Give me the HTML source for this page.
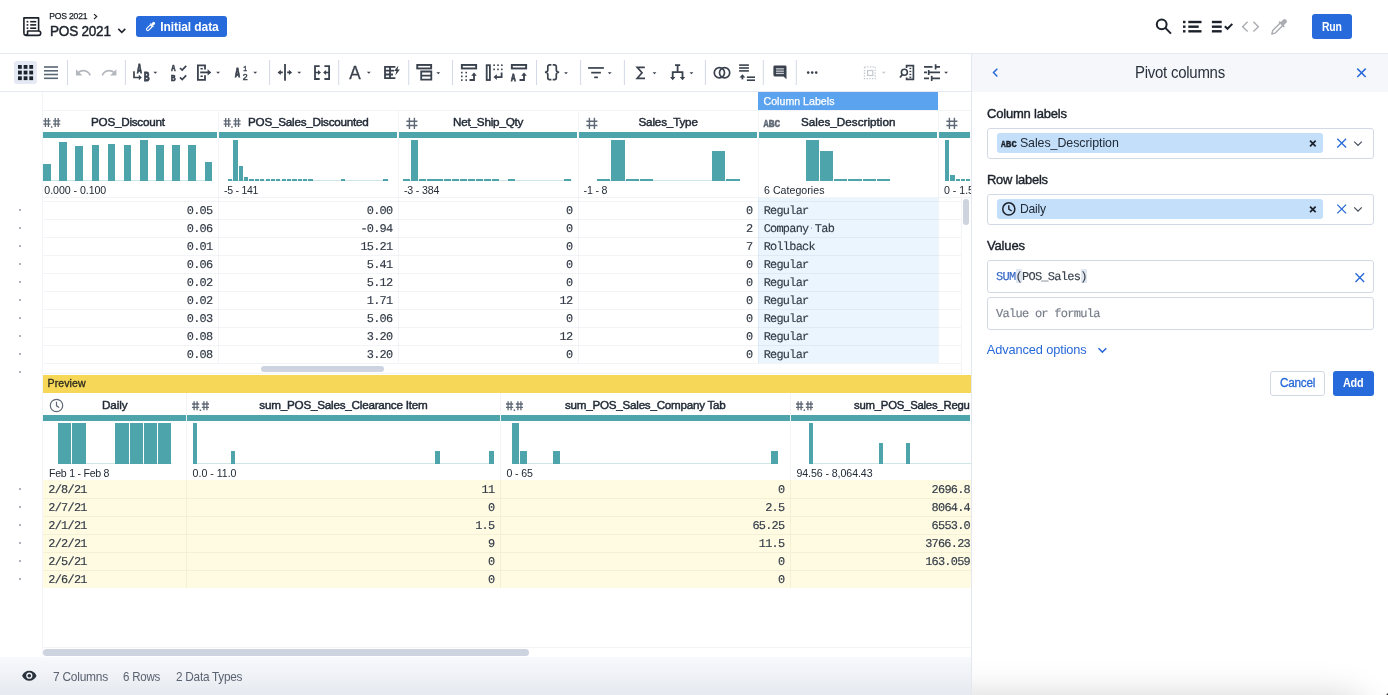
<!DOCTYPE html>
<html lang="en">
<head>
<meta charset="utf-8">
<title>POS 2021</title>
<style>
*{box-sizing:border-box;margin:0;padding:0}
html,body{width:1388px;height:695px;overflow:hidden;background:#fff}
body{will-change:transform;font-family:"Liberation Sans",sans-serif;color:#222b36;position:relative;font-size:12px}
.t{position:absolute;white-space:pre;display:block}
.a{position:absolute}
.m{font-family:"Liberation Mono",monospace}
svg{position:absolute;overflow:visible}
svg text{font-family:"Liberation Mono",monospace;font-weight:bold}
#hdr{position:absolute;left:0;top:0;width:1388px;height:54px;border-bottom:1px solid #e4e9f2;background:#fff}
#tb{position:absolute;left:0;top:54px;width:971px;height:38px;border-bottom:1px solid #e4e9f2;background:#fff}
#grid{position:absolute;left:0;top:92px;width:971px;height:566px;background:#fff;overflow:hidden}
#status{position:absolute;left:0;top:657px;width:971px;height:38px;background:linear-gradient(#f7f9fc,#e6e9ef)}
#panel{position:absolute;left:971px;top:54px;width:417px;height:641px;background:#fff;border-left:1px solid #e2e7f0}
#pfade{position:absolute;left:972px;top:640px;width:416px;height:55px;overflow:hidden}
#pfade i{position:absolute;left:-40px;top:69px;width:425px;height:40px;border-radius:20px;box-shadow:0 0 34px 14px rgba(0,0,0,.17)}
#pfade b{position:absolute;right:0;bottom:0;width:0;height:0;border-left:2px solid transparent;border-bottom:2px solid #333}
.btn{position:absolute;border-radius:3px;background:#276adb}
.vl{position:absolute;width:1px;background:rgba(30,60,110,.055)}
.hl{position:absolute;height:1px;background:rgba(30,60,110,.055)}
.teal{position:absolute;background:#4da4aa}
.bar{position:absolute;background:#4da4aa}
.base{position:absolute;height:1px;background:#cfe6e8}
.box{position:absolute;border:1px solid #d3d9e4;border-radius:3px;background:#fff}
.chip{position:absolute;border-radius:3px;background:#c3dffa}
</style>
</head>
<body>
<div id="hdr">
<svg width="1388" height="54" viewBox="0 0 1388 54" style="left:0;top:0">
<g fill="none" stroke="#1c222b" stroke-width="1.6" stroke-linejoin="round" stroke-linecap="butt">
<path d="M23.9 33.2V17.9H38.6V31"/>
<path d="M23.9 33.2a2.2 2.2 0 0 0 2.2 2.2H38.5a2.2 2.2 0 0 0 0-4.4H27.6v2.3a1.8 1.8 0 0 1-3.6 0"/>
</g>
<g fill="#1c222b">
<rect x="26.6" y="20.9" width="1.7" height="1.6"/><rect x="30.2" y="20.9" width="6" height="1.6"/>
<rect x="26.6" y="24.1" width="1.7" height="1.6"/><rect x="30.2" y="24.1" width="6" height="1.6"/>
<rect x="26.6" y="27.4" width="1.7" height="1.6"/><rect x="30.2" y="27.4" width="6" height="1.6"/>
</g>
<path d="M94 14.1l2.700 2.500-2.700 2.500" fill="none" stroke="#1c222b" stroke-width="1.2"/>
<path d="M118.3 28.9l3.5 3.5 3.5-3.5" fill="none" stroke="#1c222b" stroke-width="1.5"/>
<!-- search -->
<g fill="none" stroke="#1c222b" stroke-width="2">
<circle cx="1161.700" cy="24.300" r="4.900"/><path d="M1165.300 27.900l5.700 5.700"/>
</g>
<!-- list -->
<g fill="#1c222b">
<rect x="1183" y="20.8" width="2.5" height="2.4"/><rect x="1188.3" y="20.8" width="13.2" height="2.4"/>
<rect x="1183" y="25.5" width="2.5" height="2.4"/><rect x="1188.3" y="25.5" width="10.4" height="2.4"/>
<rect x="1183" y="30.1" width="2.5" height="2.4"/><rect x="1188.3" y="30.1" width="13.2" height="2.4"/>
<rect x="1211.9" y="20.8" width="9.8" height="2.4"/>
<rect x="1211.9" y="25.5" width="9.8" height="2.4"/>
<rect x="1211.9" y="30.1" width="9.8" height="2.4"/>
</g>
<path d="M1224.8 26.2l2.7 2.6 4.8-4.9" fill="none" stroke="#1c222b" stroke-width="2"/>
<!-- code -->
<path d="M1247.6 21.8l-5 4.9 5 4.9M1253.4 21.8l5 4.9-5 4.9" fill="none" stroke="#a9acb1" stroke-width="1.4"/>
<!-- dropper -->
<g fill="none" stroke="#a9acb1" stroke-width="1.4" stroke-linejoin="round">
<path d="M1280 23.3l-7.3 7.3-.9 3.4 3.4-.9 7.3-7.3"/>
</g>
<path d="M1278.6 22.3l1.2-1.2 1 1 2.600-2.600a1.700 1.700 0 0 1 2.400 0l.7.7a1.700 1.700 0 0 1 0 2.400l-2.600 2.600 1 1-1.200 1.200z" fill="#a9acb1"/>
<!-- initial data pencil -->
</svg>
<span class="t" style="top:12.00px;font-size:8.6px;line-height:8.6px;left:49.30px;letter-spacing:-0.198px;color:#1c222b;-webkit-text-stroke:0.25px #1c222b;">POS 2021</span>
<span class="t" style="top:24.00px;font-size:14.2px;line-height:14.2px;left:49.60px;letter-spacing:-0.250px;color:#1c222b;-webkit-text-stroke:0.45px #1c222b;transform:scaleX(0.9565);transform-origin:0 50%;">POS 2021</span>
<div class="btn" style="left:136px;top:16px;width:91px;height:21px"></div>
<svg width="12" height="12" viewBox="144 21 12 12" style="left:144px;top:21px">
<g transform="translate(150 27) rotate(45)">
<rect x="-1.350" y="-1.900" width="2.700" height="6.300" rx="1.250" fill="none" stroke="#fff" stroke-width="1.100"/>
<rect x="-2.400" y="-3" width="4.800" height="1.200" fill="#fff"/>
<rect x="-1.400" y="-6.600" width="2.800" height="4" rx="1.200" fill="#fff"/>
</g>
</svg>
<span class="t" style="top:21.00px;font-size:12px;line-height:12px;left:160.30px;letter-spacing:-0.077px;font-weight:bold;color:#fff;">Initial data</span>
<div class="btn" style="left:1312px;top:14px;width:40px;height:25px"></div>
<span class="t" style="top:21.00px;font-size:12px;line-height:12px;left:1321.80px;letter-spacing:-0.250px;font-weight:bold;color:#fff;transform:scaleX(0.8674);transform-origin:0 50%;">Run</span>
</div>
<div id="tb"></div>
<svg width="971" height="38" viewBox="0 54 971 38" style="left:0;top:54px">
<rect x="14" y="61" width="23" height="23" rx="3" fill="#e4e9f3"/>
<rect x="18.00" y="65.00" width="3.8" height="3.8" fill="#1c222b"/>
<rect x="23.65" y="65.00" width="3.8" height="3.8" fill="#1c222b"/>
<rect x="29.30" y="65.00" width="3.8" height="3.8" fill="#1c222b"/>
<rect x="18.00" y="70.65" width="3.8" height="3.8" fill="#1c222b"/>
<rect x="23.65" y="70.65" width="3.8" height="3.8" fill="#1c222b"/>
<rect x="29.30" y="70.65" width="3.8" height="3.8" fill="#1c222b"/>
<rect x="18.00" y="76.30" width="3.8" height="3.8" fill="#1c222b"/>
<rect x="23.65" y="76.30" width="3.8" height="3.8" fill="#1c222b"/>
<rect x="29.30" y="76.30" width="3.8" height="3.8" fill="#1c222b"/>
<rect x="44" y="66.20" width="14" height="1.6" fill="#5a6775"/>
<rect x="44" y="70.00" width="14" height="1.6" fill="#5a6775"/>
<rect x="44" y="73.70" width="14" height="1.6" fill="#5a6775"/>
<rect x="44" y="77.50" width="14" height="1.6" fill="#5a6775"/>
<rect x="67.0" y="60" width="1" height="25" fill="#d3d9e6"/>
<rect x="124.9" y="60" width="1" height="25" fill="#d3d9e6"/>
<rect x="269.1" y="60" width="1" height="25" fill="#d3d9e6"/>
<rect x="338.2" y="60" width="1" height="25" fill="#d3d9e6"/>
<rect x="408.2" y="60" width="1" height="25" fill="#d3d9e6"/>
<rect x="452.0" y="60" width="1" height="25" fill="#d3d9e6"/>
<rect x="536.0" y="60" width="1" height="25" fill="#d3d9e6"/>
<rect x="580.1" y="60" width="1" height="25" fill="#d3d9e6"/>
<rect x="623.9" y="60" width="1" height="25" fill="#d3d9e6"/>
<rect x="704.9" y="60" width="1" height="25" fill="#d3d9e6"/>
<rect x="762.8" y="60" width="1" height="25" fill="#d3d9e6"/>
<rect x="795.8" y="60" width="1" height="25" fill="#d3d9e6"/>
<path d="M90.200 75.300c-1.600-3-4.200-4.600-7-4.600-2 0-3.700.7-5 1.900" fill="none" stroke="#b4b8be" stroke-width="1.7"/>
<path d="M76 69.300v6.300h6.300z" fill="#b4b8be"/>
<path d="M102.200 75.300c1.600-3 4.200-4.600 7-4.600 2 0 3.700.7 5 1.900" fill="none" stroke="#b4b8be" stroke-width="1.7"/>
<path d="M116.400 69.300v6.300h-6.300z" fill="#b4b8be"/>
<text transform="translate(137.00 72.60) scale(0.783 1.214)" font-size="10" fill="#3a424e" stroke="#3a424e" stroke-width="0.65" style="font-family:Liberation Mono,monospace;font-weight:bold">A</text>
<text transform="translate(143.66 80.70) scale(0.957 1.229)" font-size="10" fill="#3a424e" stroke="#3a424e" stroke-width="0.65" style="font-family:Liberation Mono,monospace;font-weight:bold">B</text>
<path d="M134 71.200v6.300h5.500" fill="none" stroke="#3a424e" stroke-width="1.700"/>
<path d="M138.800 74.700l3 2.800-3 2.800z" fill="#3a424e"/>
<path d="M153.4 71.7h3.8l-1.9 2.100z" fill="#3a424e"/>
<text transform="translate(171.20 71.30) scale(0.700 0.971)" font-size="10" fill="#3a424e" stroke="#3a424e" stroke-width="0.65" style="font-family:Liberation Mono,monospace;font-weight:bold">A</text>
<text transform="translate(170.76 80.70) scale(0.801 0.986)" font-size="10" fill="#3a424e" stroke="#3a424e" stroke-width="0.65" style="font-family:Liberation Mono,monospace;font-weight:bold">B</text>
<path d="M180 68l2.200 2.100 4-4.200M180 77.400l2.200 2.100 4-4.200" fill="none" stroke="#3a424e" stroke-width="1.700"/>
<path d="M205 69.500V65.400H197.900V79.900H205V75.300" fill="none" stroke="#3a424e" stroke-width="1.800"/>
<path d="M200.500 68.700h2.300M200.500 76.300h2.300" stroke="#3a424e" stroke-width="1.600"/>
<path d="M200.200 72.400h8" stroke="#3a424e" stroke-width="1.800"/>
<path d="M207.600 69.200l3.700 3.200-3.700 3.200z" fill="#3a424e"/>
<path d="M216.2 71.7h3.8l-1.9 2.100z" fill="#3a424e"/>
<text transform="translate(235.10 77.20) scale(0.817 1.305)" font-size="10" fill="#3a424e" stroke="#3a424e" stroke-width="0.65" style="font-family:Liberation Mono,monospace;font-weight:bold">A</text>
<text transform="translate(243.15 71.10) scale(0.625 0.759)" font-size="10" fill="#3a424e" stroke="#3a424e" stroke-width="0.55" style="font-family:Liberation Mono,monospace;font-weight:normal">1</text>
<text transform="translate(242.47 80.00) scale(0.893 0.867)" font-size="10" fill="#3a424e" stroke="#3a424e" stroke-width="0.55" style="font-family:Liberation Mono,monospace;font-weight:normal">2</text>
<path d="M253.3 71.7h3.8l-1.9 2.100z" fill="#3a424e"/>
<rect x="284.100" y="64" width="1.800" height="16.700" fill="#3a424e"/>
<path d="M282.800 72.400h-3.500M289.200 72.400h-2" stroke="#3a424e" stroke-width="1.600"/>
<path d="M280.800 69.700l-3.200 2.700 3.200 2.700zM288.900 69.700l3.200 2.700-3.200 2.700z" fill="#3a424e"/>
<path d="M297.3 71.7h3.8l-1.9 2.100z" fill="#3a424e"/>
<path d="M319.700 66.100H315V79H319.700M324.400 66.100H329.100V79H324.400" fill="none" stroke="#3a424e" stroke-width="1.800"/>
<path d="M315 72.500h3.500M329 72.500h-3.500" stroke="#3a424e" stroke-width="1.600"/>
<path d="M318 70l3 2.500-3 2.500zM326.100 70l-3 2.500 3 2.500z" fill="#3a424e"/>
<text transform="translate(349.17 79.00) scale(1.719 1.875)" font-size="10" fill="#3a424e" stroke="#3a424e" stroke-width="0.15" style="font-family:Liberation Sans,sans-serif;font-weight:normal">A</text>
<path d="M366.9 71.7h3.8l-1.9 2.100z" fill="#3a424e"/>
<path d="M395.400 66.900H385V78.200H395.400M385 70.700H394M385 74.500H393M390 66.900V78.200" fill="none" stroke="#3a424e" stroke-width="1.800"/>
<path d="M398.400 65.500l-4.300 5.600h2.300l-1.100 4.300 4.600-6h-2.400z" fill="#3a424e"/>
<rect x="417.250" y="64.950" width="13.900" height="3.500" fill="none" stroke="#3a424e" stroke-width="1.900"/>
<path d="M421.200 71.500H431.300V79.700H421.200zM421.200 75.600H431.300" fill="none" stroke="#3a424e" stroke-width="1.800"/>
<path d="M436.4 72.2h3.8l-1.9 2.100z" fill="#3a424e"/>
<rect x="461.850" y="64.950" width="14.300" height="3.500" fill="none" stroke="#3a424e" stroke-width="1.900"/>
<rect x="461" y="71.8" width="1.600" height="1.600" fill="#3a424e"/>
<rect x="465.4" y="71.8" width="1.600" height="1.600" fill="#3a424e"/>
<rect x="461" y="75.6" width="1.600" height="1.600" fill="#3a424e"/>
<rect x="465.4" y="75.6" width="1.600" height="1.600" fill="#3a424e"/>
<rect x="461" y="79.3" width="1.600" height="1.600" fill="#3a424e"/>
<rect x="465.4" y="79.3" width="1.600" height="1.600" fill="#3a424e"/>
<path d="M469.5 80h4.500v-5" fill="none" stroke="#3a424e" stroke-width="1.800"/><path d="M471.2 75.700l2.800-3.300 2.800 3.300z" fill="#3a424e"/>
<rect x="486.700" y="65.200" width="3.200" height="14.800" fill="none" stroke="#3a424e" stroke-width="1.800"/>
<rect x="493.3" y="64.4" width="1.600" height="1.600" fill="#3a424e"/>
<rect x="497.2" y="64.4" width="1.600" height="1.600" fill="#3a424e"/>
<rect x="501" y="64.4" width="1.600" height="1.600" fill="#3a424e"/>
<rect x="493.3" y="68.6" width="1.600" height="1.600" fill="#3a424e"/>
<rect x="497.2" y="68.6" width="1.600" height="1.600" fill="#3a424e"/>
<rect x="501" y="68.6" width="1.600" height="1.600" fill="#3a424e"/>
<path d="M501.600 72.500v4.600h-5.500" fill="none" stroke="#3a424e" stroke-width="1.800"/>
<path d="M496.800 74.300l-3.300 2.800 3.300 2.800z" fill="#3a424e"/>
<rect x="511.850" y="64.950" width="14.300" height="3.500" fill="none" stroke="#3a424e" stroke-width="1.900"/>
<text transform="translate(511.00 80.80) scale(0.767 1.184)" font-size="10" fill="#3a424e" stroke="#3a424e" stroke-width="0.65" style="font-family:Liberation Mono,monospace;font-weight:bold">A</text>
<path d="M519.5 80h4.500v-5" fill="none" stroke="#3a424e" stroke-width="1.800"/><path d="M521.2 75.700l2.800-3.300 2.800 3.300z" fill="#3a424e"/>
<path d="M551.400 64.900h-1.800a1.800 1.800 0 0 0-1.800 1.800v3.350a2.900 2.200 0 0 1-2.900 2.200a2.900 2.200 0 0 1 2.900 2.200v3.350a1.800 1.800 0 0 0 1.800 1.800h1.800M552.700 64.900h1.800a1.800 1.800 0 0 1 1.800 1.800v3.350a2.900 2.200 0 0 0 2.900 2.200a2.900 2.200 0 0 0-2.900 2.200v3.350a1.800 1.800 0 0 1-1.800 1.800h-1.800" fill="none" stroke="#3a424e" stroke-width="1.700"/>
<path d="M564.1 72.2h3.8l-1.9 2.100z" fill="#3a424e"/>
<rect x="588.100" y="67.100" width="15.800" height="1.700" fill="#3a424e"/><rect x="591.200" y="71.800" width="9.700" height="1.700" fill="#3a424e"/><rect x="594.200" y="76.500" width="3.700" height="1.700" fill="#3a424e"/>
<path d="M607.8 72.2h3.8l-1.9 2.100z" fill="#3a424e"/>
<path d="M644.800 67.400H637.200L642 72.800 637.200 78.300H645" fill="none" stroke="#3a424e" stroke-width="1.700" stroke-linejoin="miter"/>
<path d="M652.6 72.2h3.8l-1.9 2.100z" fill="#3a424e"/>
<path d="M675 65.200h5.200M677.600 65.200v7M672.700 77.500v-5.300h9.800v5.300" fill="none" stroke="#3a424e" stroke-width="1.800"/>
<path d="M670 76.900h5.400l-2.700 3.400zM679.800 76.900h5.400l-2.700 3.400z" fill="#3a424e"/>
<path d="M689.6 72.2h3.8l-1.9 2.100z" fill="#3a424e"/>
<circle cx="719.400" cy="72.800" r="5.100" fill="none" stroke="#3a424e" stroke-width="1.700"/><circle cx="724.600" cy="72.800" r="5.100" fill="none" stroke="#3a424e" stroke-width="1.700"/>
<rect x="739.100" y="64.3" width="9.800" height="1.600" fill="#3a424e"/>
<rect x="739.100" y="67.2" width="9.800" height="1.600" fill="#3a424e"/>
<rect x="739.100" y="70.1" width="9.800" height="1.600" fill="#3a424e"/>
<rect x="746.900" y="76.4" width="8.100" height="1.600" fill="#3a424e"/>
<rect x="746.900" y="79.4" width="8.100" height="1.600" fill="#3a424e"/>
<path d="M742.400 79.400v-3" stroke="#3a424e" stroke-width="1.800"/><path d="M739.500 77.500l2.900-3.200 2.900 3.200z" fill="#3a424e"/>
<path d="M774.700 65.600h10.500a1.300 1.300 0 0 1 1.300 1.300V79.300l-3-2.900h-8.800a1.300 1.300 0 0 1-1.300-1.300V66.900a1.300 1.300 0 0 1 1.300-1.300z" fill="#3a424e"/>
<rect x="776" y="68.2" width="7.900" height="1.300" fill="#c9cdd3"/>
<rect x="776" y="70.5" width="7.900" height="1.300" fill="#c9cdd3"/>
<rect x="776" y="72.8" width="7.900" height="1.300" fill="#c9cdd3"/>
<circle cx="808.2" cy="72.600" r="1.300" fill="#3a424e"/>
<circle cx="812.2" cy="72.600" r="1.300" fill="#3a424e"/>
<circle cx="816.2" cy="72.600" r="1.300" fill="#3a424e"/>
<rect x="864.500" y="66.900" width="10.700" height="11.700" fill="none" stroke="#c4c8cf" stroke-width="1.300" stroke-dasharray="1.300 1.400"/>
<rect x="867.600" y="70.500" width="5.200" height="5" fill="none" stroke="#c4c8cf" stroke-width="1.200"/>
<path d="M881.8 71.7h3.8l-1.9 2.100z" fill="#c4c8cf"/>
<path d="M906.600 68V65.700h6.800V79.300h-6.800V77.500" fill="none" stroke="#3a424e" stroke-width="1.700"/>
<rect x="909.400" y="67.8" width="1.900" height="1.300" fill="#3a424e"/>
<rect x="909.400" y="70.8" width="1.900" height="1.300" fill="#3a424e"/>
<rect x="909.400" y="73.8" width="1.900" height="1.300" fill="#3a424e"/>
<rect x="909.400" y="76.6" width="1.900" height="1.300" fill="#3a424e"/>
<circle cx="904.400" cy="72.300" r="3" fill="#fff" stroke="#3a424e" stroke-width="1.600"/><path d="M902.300 74.600l-2.300 2.900" stroke="#3a424e" stroke-width="1.700"/>
<path d="M924 66.800h8.500M935.600 66.800h4.400M924 72.400h3M928.800 72.400h11.200M924 78.300h5M931.800 78.300h8.200" stroke="#3a424e" stroke-width="1.800"/>
<path d="M935.600 64.200v5.300M928.700 69.900v5.100M931.700 75.800v5.300" stroke="#3a424e" stroke-width="1.700"/>
<path d="M944.2 71.7h3.8l-1.9 2.100z" fill="#3a424e"/>
</svg>
<div id="grid">
<div class="a" style="left:0;top:-92px;width:971px;height:750px">
<div class="vl" style="left:42px;top:92px;height:566px"></div>
<div class="a" style="left:758px;top:92px;width:180px;height:18px;background:#5ba3ee"></div>
<span class="t" style="top:96.00px;font-size:10.6px;line-height:10.6px;left:763.50px;letter-spacing:0.024px;color:#fff;-webkit-text-stroke:0.25px #fff;">Column Labels</span>
<div class="hl" style="left:43px;top:110px;width:928px"></div>
<div class="a" style="left:758px;top:198px;width:180px;height:165px;background:#eaf5fe"></div>
<div class="vl" style="left:218px;top:111px;height:252px"></div>
<div class="vl" style="left:398px;top:111px;height:252px"></div>
<div class="vl" style="left:578px;top:111px;height:252px"></div>
<div class="vl" style="left:758px;top:111px;height:252px"></div>
<div class="vl" style="left:938px;top:111px;height:252px"></div>
<div class="teal" style="left:43px;top:132px;width:174px;height:6px"></div>
<div class="teal" style="left:219px;top:132px;width:178px;height:6px"></div>
<div class="teal" style="left:399px;top:132px;width:178px;height:6px"></div>
<div class="teal" style="left:579px;top:132px;width:178px;height:6px"></div>
<div class="teal" style="left:759px;top:132px;width:178px;height:6px"></div>
<div class="teal" style="left:939px;top:132px;width:31px;height:6px"></div>
<span class="t" style="top:116.00px;font-size:11.7px;line-height:11.7px;left:91.00px;letter-spacing:-0.249px;color:#222b36;-webkit-text-stroke:0.45px #222b36;">POS_Discount</span>
<span class="t" style="top:116.00px;font-size:11.7px;line-height:11.7px;left:248.00px;letter-spacing:-0.238px;color:#222b36;-webkit-text-stroke:0.45px #222b36;">POS_Sales_Discounted</span>
<span class="t" style="top:116.00px;font-size:11.7px;line-height:11.7px;left:453.00px;letter-spacing:-0.213px;color:#222b36;-webkit-text-stroke:0.45px #222b36;">Net_Ship_Qty</span>
<span class="t" style="top:116.00px;font-size:11.7px;line-height:11.7px;left:638.50px;letter-spacing:-0.182px;color:#222b36;-webkit-text-stroke:0.45px #222b36;">Sales_Type</span>
<span class="t" style="top:116.00px;font-size:11.7px;line-height:11.7px;left:801.00px;letter-spacing:0.012px;color:#222b36;-webkit-text-stroke:0.45px #222b36;">Sales_Description</span>
<svg width="971" height="40" viewBox="0 100 971 40" style="left:0;top:100px"><g><path d="M45.40 118v9M48.40 118v9M43.30 120.8h7.2M43.30 124.2h7.2" stroke="#5f6875" stroke-width="1.300" fill="none"/><path d="M55.20 118v9M58.20 118v9M53.10 120.8h7.2M53.10 124.2h7.2" stroke="#5f6875" stroke-width="1.300" fill="none"/><rect x="50.90" y="126.3" width="1.500" height="1.500" fill="#5f6875"/><path d="M225.70 118v9M228.70 118v9M223.60 120.8h7.2M223.60 124.2h7.2" stroke="#5f6875" stroke-width="1.300" fill="none"/><path d="M235.50 118v9M238.50 118v9M233.40 120.8h7.2M233.40 124.2h7.2" stroke="#5f6875" stroke-width="1.300" fill="none"/><rect x="231.20" y="126.3" width="1.500" height="1.500" fill="#5f6875"/><path d="M409.40 117.7v11.2M414.40 117.7v11.2M406.40 121.3h11M406.40 125.5h11" stroke="#5f6875" stroke-width="1.400" fill="none"/><path d="M589.40 117.7v11.2M594.40 117.7v11.2M586.40 121.3h11M586.40 125.5h11" stroke="#5f6875" stroke-width="1.400" fill="none"/><path d="M949.40 117.7v11.2M954.40 117.7v11.2M946.40 121.3h11M946.40 125.5h11" stroke="#5f6875" stroke-width="1.400" fill="none"/><text transform="translate(763.40 126.60) scale(0.858 1.047)" font-size="10" fill="#5f6875" stroke="#5f6875" stroke-width="0.4" style="font-family:Liberation Mono,monospace;font-weight:bold">A</text><text transform="translate(768.53 126.60) scale(1.006 1.047)" font-size="10" fill="#5f6875" stroke="#5f6875" stroke-width="0.4" style="font-family:Liberation Mono,monospace;font-weight:bold">B</text><text transform="translate(774.62 126.50) scale(0.966 1.016)" font-size="10" fill="#5f6875" stroke="#5f6875" stroke-width="0.4" style="font-family:Liberation Mono,monospace;font-weight:bold">C</text></g></svg>
<div class="base" style="left:43.00px;top:180px;width:169.00px"></div>
<div class="bar" style="left:43.20px;top:164.00px;width:7.60px;height:17.00px"></div>
<div class="bar" style="left:59.33px;top:142.40px;width:7.60px;height:38.60px"></div>
<div class="bar" style="left:75.46px;top:145.60px;width:7.60px;height:35.40px"></div>
<div class="bar" style="left:91.59px;top:144.50px;width:7.60px;height:36.50px"></div>
<div class="bar" style="left:107.72px;top:143.50px;width:7.60px;height:37.50px"></div>
<div class="bar" style="left:123.85px;top:144.50px;width:7.60px;height:36.50px"></div>
<div class="bar" style="left:139.98px;top:140.00px;width:7.60px;height:41.00px"></div>
<div class="bar" style="left:156.11px;top:144.50px;width:7.60px;height:36.50px"></div>
<div class="bar" style="left:172.24px;top:144.50px;width:7.60px;height:36.50px"></div>
<div class="bar" style="left:188.37px;top:144.50px;width:7.60px;height:36.50px"></div>
<div class="bar" style="left:204.50px;top:162.20px;width:7.60px;height:18.80px"></div>
<div class="base" style="left:228.00px;top:180px;width:160.50px"></div>
<div class="bar" style="left:228.00px;top:179.00px;width:4.20px;height:2.00px"></div>
<div class="bar" style="left:233.36px;top:140.00px;width:4.20px;height:41.00px"></div>
<div class="bar" style="left:238.72px;top:165.80px;width:4.20px;height:15.20px"></div>
<div class="bar" style="left:244.08px;top:176.60px;width:4.20px;height:4.40px"></div>
<div class="bar" style="left:340.56px;top:179.00px;width:4.20px;height:2.00px"></div>
<div class="bar" style="left:383.44px;top:179.00px;width:4.20px;height:2.00px"></div>
<div class="bar" style="left:249.44px;top:179.00px;width:4.20px;height:2.00px"></div>
<div class="bar" style="left:254.80px;top:179.00px;width:4.20px;height:2.00px"></div>
<div class="bar" style="left:260.16px;top:179.00px;width:4.20px;height:2.00px"></div>
<div class="bar" style="left:265.52px;top:179.00px;width:4.20px;height:2.00px"></div>
<div class="bar" style="left:270.88px;top:179.00px;width:4.20px;height:2.00px"></div>
<div class="bar" style="left:276.24px;top:179.00px;width:4.20px;height:2.00px"></div>
<div class="bar" style="left:281.60px;top:179.00px;width:4.20px;height:2.00px"></div>
<div class="bar" style="left:286.96px;top:179.00px;width:4.20px;height:2.00px"></div>
<div class="bar" style="left:292.32px;top:179.00px;width:4.20px;height:2.00px"></div>
<div class="bar" style="left:297.68px;top:179.00px;width:4.20px;height:2.00px"></div>
<div class="bar" style="left:303.04px;top:179.00px;width:4.20px;height:2.00px"></div>
<div class="bar" style="left:308.40px;top:179.00px;width:4.20px;height:2.00px"></div>
<div class="base" style="left:403.00px;top:180px;width:169.00px"></div>
<div class="bar" style="left:403.30px;top:179.00px;width:7.10px;height:2.00px"></div>
<div class="bar" style="left:411.34px;top:140.00px;width:7.10px;height:41.00px"></div>
<div class="bar" style="left:507.82px;top:179.00px;width:7.10px;height:2.00px"></div>
<div class="bar" style="left:564.10px;top:179.00px;width:7.10px;height:2.00px"></div>
<div class="bar" style="left:419.38px;top:179.00px;width:7.10px;height:2.00px"></div>
<div class="bar" style="left:427.42px;top:179.00px;width:7.10px;height:2.00px"></div>
<div class="bar" style="left:435.46px;top:179.00px;width:7.10px;height:2.00px"></div>
<div class="bar" style="left:443.50px;top:179.00px;width:7.10px;height:2.00px"></div>
<div class="bar" style="left:451.54px;top:179.00px;width:7.10px;height:2.00px"></div>
<div class="bar" style="left:459.58px;top:179.00px;width:7.10px;height:2.00px"></div>
<div class="bar" style="left:467.62px;top:179.00px;width:7.10px;height:2.00px"></div>
<div class="bar" style="left:475.66px;top:179.00px;width:7.10px;height:2.00px"></div>
<div class="bar" style="left:483.70px;top:179.00px;width:7.10px;height:2.00px"></div>
<div class="bar" style="left:491.74px;top:179.00px;width:7.10px;height:2.00px"></div>
<div class="base" style="left:597.00px;top:180px;width:143.00px"></div>
<div class="bar" style="left:597.00px;top:179.00px;width:13.40px;height:2.00px"></div>
<div class="bar" style="left:611.35px;top:140.00px;width:13.40px;height:41.00px"></div>
<div class="bar" style="left:625.70px;top:179.00px;width:13.40px;height:2.00px"></div>
<div class="bar" style="left:640.05px;top:179.00px;width:13.40px;height:2.00px"></div>
<div class="bar" style="left:711.80px;top:150.70px;width:13.40px;height:30.30px"></div>
<div class="bar" style="left:726.15px;top:179.00px;width:13.40px;height:2.00px"></div>
<div class="bar" style="left:805.50px;top:140.00px;width:13.40px;height:41.00px"></div>
<div class="bar" style="left:819.80px;top:150.80px;width:13.40px;height:30.20px"></div>
<div class="bar" style="left:834.10px;top:179.00px;width:13.40px;height:2.00px"></div>
<div class="bar" style="left:848.40px;top:179.00px;width:13.40px;height:2.00px"></div>
<div class="bar" style="left:862.70px;top:179.00px;width:13.40px;height:2.00px"></div>
<div class="bar" style="left:877.00px;top:179.00px;width:13.40px;height:2.00px"></div>
<div class="bar" style="left:944.60px;top:140.00px;width:4.80px;height:41.00px"></div>
<div class="bar" style="left:950.00px;top:174.90px;width:4.80px;height:6.10px"></div>
<div class="bar" style="left:955.60px;top:179.00px;width:4.20px;height:2.00px"></div>
<div class="bar" style="left:960.90px;top:179.00px;width:4.20px;height:2.00px"></div>
<div class="bar" style="left:966.20px;top:179.00px;width:4.20px;height:2.00px"></div>
<span class="t" style="top:185.00px;font-size:10.6px;line-height:10.6px;left:44.30px;letter-spacing:-0.039px;color:#222b36;">0.000 - 0.100</span>
<span class="t" style="top:185.00px;font-size:10.6px;line-height:10.6px;left:224.10px;letter-spacing:-0.250px;color:#222b36;transform:scaleX(0.9890);transform-origin:0 50%;">-5 - 141</span>
<span class="t" style="top:185.00px;font-size:10.6px;line-height:10.6px;left:403.90px;letter-spacing:-0.147px;color:#222b36;">-3 - 384</span>
<span class="t" style="top:185.00px;font-size:10.6px;line-height:10.6px;left:583.60px;letter-spacing:-0.168px;color:#222b36;">-1 - 8</span>
<span class="t" style="top:185.00px;font-size:10.6px;line-height:10.6px;left:764.00px;letter-spacing:0.036px;color:#222b36;">6 Categories</span>
<span class="t" style="top:185.00px;font-size:10.6px;line-height:10.6px;left:944.00px;letter-spacing:-0.008px;color:#222b36;">0 - 1.5</span>
<div class="hl" style="left:43px;top:197px;width:928px"></div>
<div class="hl" style="left:43px;top:201px;width:918px"></div>
<div class="hl" style="left:43px;top:219px;width:918px"></div>
<span class="t m" style="top:206.00px;font-size:11.9px;line-height:11.9px;left:186.80px;letter-spacing:-0.741px;color:#333b47;-webkit-text-stroke:0.15px #333b47;text-rendering:geometricPrecision;">0.05</span>
<span class="t m" style="top:206.00px;font-size:11.9px;line-height:11.9px;left:366.80px;letter-spacing:-0.741px;color:#333b47;-webkit-text-stroke:0.15px #333b47;text-rendering:geometricPrecision;">0.00</span>
<span class="t m" style="top:206.00px;font-size:11.9px;line-height:11.9px;left:566.00px;letter-spacing:-0.741px;color:#333b47;-webkit-text-stroke:0.15px #333b47;text-rendering:geometricPrecision;">0</span>
<span class="t m" style="top:206.00px;font-size:11.9px;line-height:11.9px;left:746.00px;letter-spacing:-0.741px;color:#333b47;-webkit-text-stroke:0.15px #333b47;text-rendering:geometricPrecision;">0</span>
<span class="t m" style="top:206.00px;font-size:11.9px;line-height:11.9px;left:763.70px;letter-spacing:-0.741px;color:#333b47;-webkit-text-stroke:0.15px #333b47;text-rendering:geometricPrecision;">Regular</span>
<div class="hl" style="left:43px;top:237px;width:918px"></div>
<span class="t m" style="top:224.00px;font-size:11.9px;line-height:11.9px;left:186.80px;letter-spacing:-0.741px;color:#333b47;-webkit-text-stroke:0.15px #333b47;text-rendering:geometricPrecision;">0.06</span>
<span class="t m" style="top:224.00px;font-size:11.9px;line-height:11.9px;left:360.40px;letter-spacing:-0.741px;color:#333b47;-webkit-text-stroke:0.15px #333b47;text-rendering:geometricPrecision;">-0.94</span>
<span class="t m" style="top:224.00px;font-size:11.9px;line-height:11.9px;left:566.00px;letter-spacing:-0.741px;color:#333b47;-webkit-text-stroke:0.15px #333b47;text-rendering:geometricPrecision;">0</span>
<span class="t m" style="top:224.00px;font-size:11.9px;line-height:11.9px;left:746.00px;letter-spacing:-0.741px;color:#333b47;-webkit-text-stroke:0.15px #333b47;text-rendering:geometricPrecision;">2</span>
<span class="t m" style="top:224.00px;font-size:11.9px;line-height:11.9px;left:763.70px;letter-spacing:-0.741px;color:#333b47;-webkit-text-stroke:0.15px #333b47;text-rendering:geometricPrecision;">Company Tab</span>
<div class="a" style="left:810.8px;top:227.3px;width:1.4px;height:1.4px;border-radius:.7px;background:#b7a3ee"></div>
<div class="hl" style="left:43px;top:255px;width:918px"></div>
<span class="t m" style="top:242.00px;font-size:11.9px;line-height:11.9px;left:186.80px;letter-spacing:-0.741px;color:#333b47;-webkit-text-stroke:0.15px #333b47;text-rendering:geometricPrecision;">0.01</span>
<span class="t m" style="top:242.00px;font-size:11.9px;line-height:11.9px;left:360.40px;letter-spacing:-0.741px;color:#333b47;-webkit-text-stroke:0.15px #333b47;text-rendering:geometricPrecision;">15.21</span>
<span class="t m" style="top:242.00px;font-size:11.9px;line-height:11.9px;left:566.00px;letter-spacing:-0.741px;color:#333b47;-webkit-text-stroke:0.15px #333b47;text-rendering:geometricPrecision;">0</span>
<span class="t m" style="top:242.00px;font-size:11.9px;line-height:11.9px;left:746.00px;letter-spacing:-0.741px;color:#333b47;-webkit-text-stroke:0.15px #333b47;text-rendering:geometricPrecision;">7</span>
<span class="t m" style="top:242.00px;font-size:11.9px;line-height:11.9px;left:763.70px;letter-spacing:-0.741px;color:#333b47;-webkit-text-stroke:0.15px #333b47;text-rendering:geometricPrecision;">Rollback</span>
<div class="hl" style="left:43px;top:273px;width:918px"></div>
<span class="t m" style="top:260.00px;font-size:11.9px;line-height:11.9px;left:186.80px;letter-spacing:-0.741px;color:#333b47;-webkit-text-stroke:0.15px #333b47;text-rendering:geometricPrecision;">0.06</span>
<span class="t m" style="top:260.00px;font-size:11.9px;line-height:11.9px;left:366.80px;letter-spacing:-0.741px;color:#333b47;-webkit-text-stroke:0.15px #333b47;text-rendering:geometricPrecision;">5.41</span>
<span class="t m" style="top:260.00px;font-size:11.9px;line-height:11.9px;left:566.00px;letter-spacing:-0.741px;color:#333b47;-webkit-text-stroke:0.15px #333b47;text-rendering:geometricPrecision;">0</span>
<span class="t m" style="top:260.00px;font-size:11.9px;line-height:11.9px;left:746.00px;letter-spacing:-0.741px;color:#333b47;-webkit-text-stroke:0.15px #333b47;text-rendering:geometricPrecision;">0</span>
<span class="t m" style="top:260.00px;font-size:11.9px;line-height:11.9px;left:763.70px;letter-spacing:-0.741px;color:#333b47;-webkit-text-stroke:0.15px #333b47;text-rendering:geometricPrecision;">Regular</span>
<div class="hl" style="left:43px;top:291px;width:918px"></div>
<span class="t m" style="top:278.00px;font-size:11.9px;line-height:11.9px;left:186.80px;letter-spacing:-0.741px;color:#333b47;-webkit-text-stroke:0.15px #333b47;text-rendering:geometricPrecision;">0.02</span>
<span class="t m" style="top:278.00px;font-size:11.9px;line-height:11.9px;left:366.80px;letter-spacing:-0.741px;color:#333b47;-webkit-text-stroke:0.15px #333b47;text-rendering:geometricPrecision;">5.12</span>
<span class="t m" style="top:278.00px;font-size:11.9px;line-height:11.9px;left:566.00px;letter-spacing:-0.741px;color:#333b47;-webkit-text-stroke:0.15px #333b47;text-rendering:geometricPrecision;">0</span>
<span class="t m" style="top:278.00px;font-size:11.9px;line-height:11.9px;left:746.00px;letter-spacing:-0.741px;color:#333b47;-webkit-text-stroke:0.15px #333b47;text-rendering:geometricPrecision;">0</span>
<span class="t m" style="top:278.00px;font-size:11.9px;line-height:11.9px;left:763.70px;letter-spacing:-0.741px;color:#333b47;-webkit-text-stroke:0.15px #333b47;text-rendering:geometricPrecision;">Regular</span>
<div class="hl" style="left:43px;top:309px;width:918px"></div>
<span class="t m" style="top:296.00px;font-size:11.9px;line-height:11.9px;left:186.80px;letter-spacing:-0.741px;color:#333b47;-webkit-text-stroke:0.15px #333b47;text-rendering:geometricPrecision;">0.02</span>
<span class="t m" style="top:296.00px;font-size:11.9px;line-height:11.9px;left:366.80px;letter-spacing:-0.741px;color:#333b47;-webkit-text-stroke:0.15px #333b47;text-rendering:geometricPrecision;">1.71</span>
<span class="t m" style="top:296.00px;font-size:11.9px;line-height:11.9px;left:559.60px;letter-spacing:-0.741px;color:#333b47;-webkit-text-stroke:0.15px #333b47;text-rendering:geometricPrecision;">12</span>
<span class="t m" style="top:296.00px;font-size:11.9px;line-height:11.9px;left:746.00px;letter-spacing:-0.741px;color:#333b47;-webkit-text-stroke:0.15px #333b47;text-rendering:geometricPrecision;">0</span>
<span class="t m" style="top:296.00px;font-size:11.9px;line-height:11.9px;left:763.70px;letter-spacing:-0.741px;color:#333b47;-webkit-text-stroke:0.15px #333b47;text-rendering:geometricPrecision;">Regular</span>
<div class="hl" style="left:43px;top:327px;width:918px"></div>
<span class="t m" style="top:314.00px;font-size:11.9px;line-height:11.9px;left:186.80px;letter-spacing:-0.741px;color:#333b47;-webkit-text-stroke:0.15px #333b47;text-rendering:geometricPrecision;">0.03</span>
<span class="t m" style="top:314.00px;font-size:11.9px;line-height:11.9px;left:366.80px;letter-spacing:-0.741px;color:#333b47;-webkit-text-stroke:0.15px #333b47;text-rendering:geometricPrecision;">5.06</span>
<span class="t m" style="top:314.00px;font-size:11.9px;line-height:11.9px;left:566.00px;letter-spacing:-0.741px;color:#333b47;-webkit-text-stroke:0.15px #333b47;text-rendering:geometricPrecision;">0</span>
<span class="t m" style="top:314.00px;font-size:11.9px;line-height:11.9px;left:746.00px;letter-spacing:-0.741px;color:#333b47;-webkit-text-stroke:0.15px #333b47;text-rendering:geometricPrecision;">0</span>
<span class="t m" style="top:314.00px;font-size:11.9px;line-height:11.9px;left:763.70px;letter-spacing:-0.741px;color:#333b47;-webkit-text-stroke:0.15px #333b47;text-rendering:geometricPrecision;">Regular</span>
<div class="hl" style="left:43px;top:345px;width:918px"></div>
<span class="t m" style="top:332.00px;font-size:11.9px;line-height:11.9px;left:186.80px;letter-spacing:-0.741px;color:#333b47;-webkit-text-stroke:0.15px #333b47;text-rendering:geometricPrecision;">0.08</span>
<span class="t m" style="top:332.00px;font-size:11.9px;line-height:11.9px;left:366.80px;letter-spacing:-0.741px;color:#333b47;-webkit-text-stroke:0.15px #333b47;text-rendering:geometricPrecision;">3.20</span>
<span class="t m" style="top:332.00px;font-size:11.9px;line-height:11.9px;left:559.60px;letter-spacing:-0.741px;color:#333b47;-webkit-text-stroke:0.15px #333b47;text-rendering:geometricPrecision;">12</span>
<span class="t m" style="top:332.00px;font-size:11.9px;line-height:11.9px;left:746.00px;letter-spacing:-0.741px;color:#333b47;-webkit-text-stroke:0.15px #333b47;text-rendering:geometricPrecision;">0</span>
<span class="t m" style="top:332.00px;font-size:11.9px;line-height:11.9px;left:763.70px;letter-spacing:-0.741px;color:#333b47;-webkit-text-stroke:0.15px #333b47;text-rendering:geometricPrecision;">Regular</span>
<div class="hl" style="left:43px;top:363px;width:918px"></div>
<span class="t m" style="top:350.00px;font-size:11.9px;line-height:11.9px;left:186.80px;letter-spacing:-0.741px;color:#333b47;-webkit-text-stroke:0.15px #333b47;text-rendering:geometricPrecision;">0.08</span>
<span class="t m" style="top:350.00px;font-size:11.9px;line-height:11.9px;left:366.80px;letter-spacing:-0.741px;color:#333b47;-webkit-text-stroke:0.15px #333b47;text-rendering:geometricPrecision;">3.20</span>
<span class="t m" style="top:350.00px;font-size:11.9px;line-height:11.9px;left:566.00px;letter-spacing:-0.741px;color:#333b47;-webkit-text-stroke:0.15px #333b47;text-rendering:geometricPrecision;">0</span>
<span class="t m" style="top:350.00px;font-size:11.9px;line-height:11.9px;left:746.00px;letter-spacing:-0.741px;color:#333b47;-webkit-text-stroke:0.15px #333b47;text-rendering:geometricPrecision;">0</span>
<span class="t m" style="top:350.00px;font-size:11.9px;line-height:11.9px;left:763.70px;letter-spacing:-0.741px;color:#333b47;-webkit-text-stroke:0.15px #333b47;text-rendering:geometricPrecision;">Regular</span>
<div class="vl" style="left:961px;top:198px;height:176px"></div>
<div class="a" style="left:963px;top:199px;width:6px;height:26px;border-radius:3px;background:#cdd4df"></div>
<div class="a" style="left:261px;top:366px;width:123px;height:6px;border-radius:3px;background:#cdd4df"></div>
<div class="hl" style="left:43px;top:373px;width:918px"></div>
<div class="a" style="left:19.2px;top:209.2px;width:1.6px;height:1.6px;background:#aeb4bd"></div>
<div class="a" style="left:19.2px;top:227.2px;width:1.6px;height:1.6px;background:#aeb4bd"></div>
<div class="a" style="left:19.2px;top:245.2px;width:1.6px;height:1.6px;background:#aeb4bd"></div>
<div class="a" style="left:19.2px;top:263.2px;width:1.6px;height:1.6px;background:#aeb4bd"></div>
<div class="a" style="left:19.2px;top:281.2px;width:1.6px;height:1.6px;background:#aeb4bd"></div>
<div class="a" style="left:19.2px;top:299.2px;width:1.6px;height:1.6px;background:#aeb4bd"></div>
<div class="a" style="left:19.2px;top:317.2px;width:1.6px;height:1.6px;background:#aeb4bd"></div>
<div class="a" style="left:19.2px;top:335.2px;width:1.6px;height:1.6px;background:#aeb4bd"></div>
<div class="a" style="left:19.2px;top:353.2px;width:1.6px;height:1.6px;background:#aeb4bd"></div>
<div class="a" style="left:19.2px;top:371.2px;width:1.6px;height:1.6px;background:#aeb4bd"></div>
<div class="a" style="left:19.2px;top:488.2px;width:1.6px;height:1.6px;background:#aeb4bd"></div>
<div class="a" style="left:19.2px;top:506.2px;width:1.6px;height:1.6px;background:#aeb4bd"></div>
<div class="a" style="left:19.2px;top:524.2px;width:1.6px;height:1.6px;background:#aeb4bd"></div>
<div class="a" style="left:19.2px;top:542.2px;width:1.6px;height:1.6px;background:#aeb4bd"></div>
<div class="a" style="left:19.2px;top:560.2px;width:1.6px;height:1.6px;background:#aeb4bd"></div>
<div class="a" style="left:19.2px;top:578.2px;width:1.6px;height:1.6px;background:#aeb4bd"></div>
<div class="a" style="left:43px;top:375px;width:928px;height:18px;background:#f6d758"></div>
<span class="t" style="top:378.00px;font-size:10.6px;line-height:10.6px;left:47.60px;letter-spacing:0.050px;color:#2b2a1c;-webkit-text-stroke:0.3px #2b2a1c;">Preview</span>
<div class="a" style="left:43px;top:480px;width:928px;height:108px;background:#fefbe2"></div>
<div class="vl" style="left:186px;top:393px;height:87px"></div>
<div class="vl" style="left:186px;top:480px;height:108px;background:#f3f0d6"></div>
<div class="vl" style="left:500px;top:393px;height:87px"></div>
<div class="vl" style="left:500px;top:480px;height:108px;background:#f3f0d6"></div>
<div class="vl" style="left:790px;top:393px;height:87px"></div>
<div class="vl" style="left:790px;top:480px;height:108px;background:#f3f0d6"></div>
<div class="teal" style="left:43px;top:415px;width:142.6px;height:6px"></div>
<div class="teal" style="left:187px;top:415px;width:312.6px;height:6px"></div>
<div class="teal" style="left:501px;top:415px;width:288.6px;height:6px"></div>
<div class="teal" style="left:791px;top:415px;width:179px;height:6px"></div>
<span class="t" style="top:399.00px;font-size:11.7px;line-height:11.7px;left:102.00px;letter-spacing:-0.126px;color:#222b36;-webkit-text-stroke:0.45px #222b36;">Daily</span>
<span class="t" style="top:399.00px;font-size:11.7px;line-height:11.7px;left:259.30px;letter-spacing:-0.231px;color:#222b36;-webkit-text-stroke:0.45px #222b36;">sum_POS_Sales_Clearance Item</span>
<span class="t" style="top:399.00px;font-size:11.7px;line-height:11.7px;left:565.00px;letter-spacing:-0.250px;color:#222b36;-webkit-text-stroke:0.45px #222b36;transform:scaleX(0.9964);transform-origin:0 50%;">sum_POS_Sales_Company Tab</span>
<span class="t" style="top:399.00px;font-size:11.7px;line-height:11.7px;left:854.00px;letter-spacing:-0.250px;color:#222b36;-webkit-text-stroke:0.45px #222b36;transform:scaleX(0.9721);transform-origin:0 50%;">sum_POS_Sales_Regu</span>
<svg width="971" height="30" viewBox="0 393 971 30" style="left:0;top:393px"><circle cx="56.5" cy="405.500" r="6.2" fill="none" stroke="#5f6875" stroke-width="1.200"/><path d="M56.500 401.800v4l2.700 1.700" fill="none" stroke="#5f6875" stroke-width="1.200"/><path d="M194.10 401.2v9M197.10 401.2v9M192.00 404.0h7.2M192.00 407.4h7.2" stroke="#5f6875" stroke-width="1.300" fill="none"/><path d="M203.90 401.2v9M206.90 401.2v9M201.80 404.0h7.2M201.80 407.4h7.2" stroke="#5f6875" stroke-width="1.300" fill="none"/><rect x="199.60" y="409.5" width="1.500" height="1.500" fill="#5f6875"/><path d="M508.10 401.2v9M511.10 401.2v9M506.00 404.0h7.2M506.00 407.4h7.2" stroke="#5f6875" stroke-width="1.300" fill="none"/><path d="M517.90 401.2v9M520.90 401.2v9M515.80 404.0h7.2M515.80 407.4h7.2" stroke="#5f6875" stroke-width="1.300" fill="none"/><rect x="513.60" y="409.5" width="1.500" height="1.500" fill="#5f6875"/><path d="M798.10 401.2v9M801.10 401.2v9M796.00 404.0h7.2M796.00 407.4h7.2" stroke="#5f6875" stroke-width="1.300" fill="none"/><path d="M807.90 401.2v9M810.90 401.2v9M805.80 404.0h7.2M805.80 407.4h7.2" stroke="#5f6875" stroke-width="1.300" fill="none"/><rect x="803.60" y="409.5" width="1.500" height="1.500" fill="#5f6875"/></svg>
<div class="base" style="left:58.00px;top:463px;width:114.00px"></div>
<div class="bar" style="left:58.00px;top:423.00px;width:13.40px;height:41.00px"></div>
<div class="bar" style="left:72.30px;top:423.00px;width:13.40px;height:41.00px"></div>
<div class="bar" style="left:115.20px;top:423.00px;width:13.40px;height:41.00px"></div>
<div class="bar" style="left:129.50px;top:423.00px;width:13.40px;height:41.00px"></div>
<div class="bar" style="left:143.80px;top:423.00px;width:13.40px;height:41.00px"></div>
<div class="bar" style="left:158.10px;top:423.00px;width:13.40px;height:41.00px"></div>
<div class="base" style="left:192.80px;top:463px;width:300.80px"></div>
<div class="bar" style="left:192.80px;top:423.00px;width:4.30px;height:41.00px"></div>
<div class="bar" style="left:230.60px;top:450.50px;width:4.40px;height:13.50px"></div>
<div class="bar" style="left:435.30px;top:450.50px;width:4.40px;height:13.50px"></div>
<div class="bar" style="left:489.20px;top:450.50px;width:4.40px;height:13.50px"></div>
<div class="base" style="left:512.30px;top:463px;width:265.90px"></div>
<div class="bar" style="left:512.30px;top:423.00px;width:6.90px;height:41.00px"></div>
<div class="bar" style="left:520.20px;top:450.50px;width:6.90px;height:13.50px"></div>
<div class="bar" style="left:552.70px;top:450.50px;width:6.90px;height:13.50px"></div>
<div class="bar" style="left:770.90px;top:450.50px;width:7.30px;height:13.50px"></div>
<div class="base" style="left:809.30px;top:463px;width:161.70px"></div>
<div class="bar" style="left:809.30px;top:423.00px;width:4.20px;height:41.00px"></div>
<div class="bar" style="left:879.20px;top:443.00px;width:4.10px;height:21.00px"></div>
<div class="bar" style="left:906.10px;top:443.00px;width:4.20px;height:21.00px"></div>
<span class="t" style="top:468.00px;font-size:10.6px;line-height:10.6px;left:48.70px;letter-spacing:-0.250px;color:#222b36;transform:scaleX(0.9978);transform-origin:0 50%;">Feb 1 - Feb 8</span>
<span class="t" style="top:468.00px;font-size:10.6px;line-height:10.6px;left:192.60px;letter-spacing:-0.011px;color:#222b36;">0.0 - 11.0</span>
<span class="t" style="top:468.00px;font-size:10.6px;line-height:10.6px;left:506.60px;letter-spacing:-0.161px;color:#222b36;">0 - 65</span>
<span class="t" style="top:468.00px;font-size:10.6px;line-height:10.6px;left:796.40px;letter-spacing:-0.067px;color:#222b36;">94.56 - 8,064.43</span>
<span class="t m" style="top:485.00px;font-size:11.9px;line-height:11.9px;left:48.30px;letter-spacing:-0.741px;color:#333b47;-webkit-text-stroke:0.15px #333b47;text-rendering:geometricPrecision;">2/8/21</span>
<span class="t m" style="top:485.00px;font-size:11.9px;line-height:11.9px;left:481.60px;letter-spacing:-0.741px;color:#333b47;-webkit-text-stroke:0.15px #333b47;text-rendering:geometricPrecision;">11</span>
<span class="t m" style="top:485.00px;font-size:11.9px;line-height:11.9px;left:778.00px;letter-spacing:-0.741px;color:#333b47;-webkit-text-stroke:0.15px #333b47;text-rendering:geometricPrecision;">0</span>
<span class="t m" style="top:485.00px;font-size:11.9px;line-height:11.9px;left:931.60px;letter-spacing:-0.741px;color:#333b47;-webkit-text-stroke:0.15px #333b47;text-rendering:geometricPrecision;">2696.8</span>
<div class="hl" style="left:43px;top:498px;width:928px;background:#f3f0d6"></div>
<span class="t m" style="top:503.00px;font-size:11.9px;line-height:11.9px;left:48.30px;letter-spacing:-0.741px;color:#333b47;-webkit-text-stroke:0.15px #333b47;text-rendering:geometricPrecision;">2/7/21</span>
<span class="t m" style="top:503.00px;font-size:11.9px;line-height:11.9px;left:488.00px;letter-spacing:-0.741px;color:#333b47;-webkit-text-stroke:0.15px #333b47;text-rendering:geometricPrecision;">0</span>
<span class="t m" style="top:503.00px;font-size:11.9px;line-height:11.9px;left:765.20px;letter-spacing:-0.741px;color:#333b47;-webkit-text-stroke:0.15px #333b47;text-rendering:geometricPrecision;">2.5</span>
<span class="t m" style="top:503.00px;font-size:11.9px;line-height:11.9px;left:931.60px;letter-spacing:-0.741px;color:#333b47;-webkit-text-stroke:0.15px #333b47;text-rendering:geometricPrecision;">8064.4</span>
<div class="hl" style="left:43px;top:516px;width:928px;background:#f3f0d6"></div>
<span class="t m" style="top:521.00px;font-size:11.9px;line-height:11.9px;left:48.30px;letter-spacing:-0.741px;color:#333b47;-webkit-text-stroke:0.15px #333b47;text-rendering:geometricPrecision;">2/1/21</span>
<span class="t m" style="top:521.00px;font-size:11.9px;line-height:11.9px;left:475.20px;letter-spacing:-0.741px;color:#333b47;-webkit-text-stroke:0.15px #333b47;text-rendering:geometricPrecision;">1.5</span>
<span class="t m" style="top:521.00px;font-size:11.9px;line-height:11.9px;left:752.40px;letter-spacing:-0.741px;color:#333b47;-webkit-text-stroke:0.15px #333b47;text-rendering:geometricPrecision;">65.25</span>
<span class="t m" style="top:521.00px;font-size:11.9px;line-height:11.9px;left:931.60px;letter-spacing:-0.741px;color:#333b47;-webkit-text-stroke:0.15px #333b47;text-rendering:geometricPrecision;">6553.0</span>
<div class="hl" style="left:43px;top:534px;width:928px;background:#f3f0d6"></div>
<span class="t m" style="top:539.00px;font-size:11.9px;line-height:11.9px;left:48.30px;letter-spacing:-0.741px;color:#333b47;-webkit-text-stroke:0.15px #333b47;text-rendering:geometricPrecision;">2/2/21</span>
<span class="t m" style="top:539.00px;font-size:11.9px;line-height:11.9px;left:488.00px;letter-spacing:-0.741px;color:#333b47;-webkit-text-stroke:0.15px #333b47;text-rendering:geometricPrecision;">9</span>
<span class="t m" style="top:539.00px;font-size:11.9px;line-height:11.9px;left:758.80px;letter-spacing:-0.741px;color:#333b47;-webkit-text-stroke:0.15px #333b47;text-rendering:geometricPrecision;">11.5</span>
<span class="t m" style="top:539.00px;font-size:11.9px;line-height:11.9px;left:925.20px;letter-spacing:-0.741px;color:#333b47;-webkit-text-stroke:0.15px #333b47;text-rendering:geometricPrecision;">3766.23</span>
<div class="hl" style="left:43px;top:552px;width:928px;background:#f3f0d6"></div>
<span class="t m" style="top:557.00px;font-size:11.9px;line-height:11.9px;left:48.30px;letter-spacing:-0.741px;color:#333b47;-webkit-text-stroke:0.15px #333b47;text-rendering:geometricPrecision;">2/5/21</span>
<span class="t m" style="top:557.00px;font-size:11.9px;line-height:11.9px;left:488.00px;letter-spacing:-0.741px;color:#333b47;-webkit-text-stroke:0.15px #333b47;text-rendering:geometricPrecision;">0</span>
<span class="t m" style="top:557.00px;font-size:11.9px;line-height:11.9px;left:778.00px;letter-spacing:-0.741px;color:#333b47;-webkit-text-stroke:0.15px #333b47;text-rendering:geometricPrecision;">0</span>
<span class="t m" style="top:557.00px;font-size:11.9px;line-height:11.9px;left:925.20px;letter-spacing:-0.741px;color:#333b47;-webkit-text-stroke:0.15px #333b47;text-rendering:geometricPrecision;">163.059</span>
<div class="hl" style="left:43px;top:570px;width:928px;background:#f3f0d6"></div>
<span class="t m" style="top:575.00px;font-size:11.9px;line-height:11.9px;left:48.30px;letter-spacing:-0.741px;color:#333b47;-webkit-text-stroke:0.15px #333b47;text-rendering:geometricPrecision;">2/6/21</span>
<span class="t m" style="top:575.00px;font-size:11.9px;line-height:11.9px;left:488.00px;letter-spacing:-0.741px;color:#333b47;-webkit-text-stroke:0.15px #333b47;text-rendering:geometricPrecision;">0</span>
<span class="t m" style="top:575.00px;font-size:11.9px;line-height:11.9px;left:778.00px;letter-spacing:-0.741px;color:#333b47;-webkit-text-stroke:0.15px #333b47;text-rendering:geometricPrecision;">0</span>
<div class="hl" style="left:43px;top:647px;width:928px"></div>
<div class="a" style="left:43px;top:649px;width:486px;height:7px;border-radius:3.5px;background:#cdd4df"></div>
</div></div>
<div id="status"></div>
<svg width="20" height="14" viewBox="20 669 20 14" style="left:20px;top:669px">
<path d="M29.300 670.700c-3.300 0-6.100 2.100-7.200 5 1.100 2.900 3.900 5 7.200 5s6.100-2.100 7.200-5c-1.100-2.900-3.900-5-7.200-5z" fill="#2a323d"/>
<circle cx="29.300" cy="675.700" r="3.100" fill="#f0f2f6"/><circle cx="29.300" cy="675.700" r="1.800" fill="#2a323d"/>
</svg>
<span class="t" style="top:671.00px;font-size:12.1px;line-height:12.1px;left:53.00px;letter-spacing:-0.250px;color:#5a6370;transform:scaleX(0.9886);transform-origin:0 50%;">7 Columns</span>
<span class="t" style="top:671.00px;font-size:12.1px;line-height:12.1px;left:123.30px;letter-spacing:-0.250px;color:#5a6370;transform:scaleX(0.9540);transform-origin:0 50%;">6 Rows</span>
<span class="t" style="top:671.00px;font-size:12.1px;line-height:12.1px;left:175.70px;letter-spacing:-0.250px;color:#5a6370;transform:scaleX(0.9733);transform-origin:0 50%;">2 Data Types</span>
<div id="panel"></div>
<div class="a" style="left:972px;top:54px;width:416px;height:38px;background:#f5f7fb"></div>
<span class="t" style="top:65.00px;font-size:15.6px;line-height:15.6px;left:1134.80px;letter-spacing:-0.250px;color:#2a323d;transform:scaleX(0.9585);transform-origin:0 50%;">Pivot columns</span>
<div class="box" style="left:987px;top:128px;width:387px;height:31px"></div>
<div class="chip" style="left:997px;top:133px;width:326px;height:20px"></div>
<div class="box" style="left:987px;top:194px;width:387px;height:31px"></div>
<div class="chip" style="left:997px;top:199px;width:326px;height:20px"></div>
<div class="box" style="left:987px;top:260px;width:387px;height:33px"></div>
<div class="box" style="left:987px;top:297px;width:387px;height:33px"></div>
<svg width="416" height="400" viewBox="972 54 416 400" style="left:972px;top:54px"><path d="M997.300 68.700l-3.800 3.900 3.800 3.900" stroke="#2869d8" stroke-width="1.500" fill="none"/><path d="M1357.3 68.6l8.4 8.4M1365.7 68.6l-8.4 8.4" stroke="#2869d8" stroke-width="1.5" fill="none"/><path d="M1310.05 140.7l5.6 5.6M1315.6499999999999 140.7l-5.6 5.6" stroke="#1c222b" stroke-width="1.7" fill="none"/><path d="M1337.3 138.7l8.8 8.8M1346.1000000000001 138.7l-8.8 8.8" stroke="#2869d8" stroke-width="1.3" fill="none"/><path d="M1354.200 141.600l3.800 3.800 3.800-3.800" stroke="#464e5a" stroke-width="1.200" fill="none"/><path d="M1310.05 206.6l5.6 5.6M1315.6499999999999 206.6l-5.6 5.6" stroke="#1c222b" stroke-width="1.7" fill="none"/><path d="M1337.3 204.6l8.8 8.8M1346.1000000000001 204.6l-8.8 8.8" stroke="#2869d8" stroke-width="1.3" fill="none"/><path d="M1354.200 207.400l3.800 3.800 3.800-3.800" stroke="#464e5a" stroke-width="1.200" fill="none"/><text transform="translate(1001.00 146.60) scale(0.783 0.986)" font-size="10" fill="#1c222b" stroke="#1c222b" stroke-width="0.4" style="font-family:Liberation Mono,monospace;font-weight:bold">A</text><text transform="translate(1005.83 146.60) scale(0.918 0.986)" font-size="10" fill="#1c222b" stroke="#1c222b" stroke-width="0.4" style="font-family:Liberation Mono,monospace;font-weight:bold">B</text><text transform="translate(1011.56 146.50) scale(0.882 0.957)" font-size="10" fill="#1c222b" stroke="#1c222b" stroke-width="0.4" style="font-family:Liberation Mono,monospace;font-weight:bold">C</text><circle cx="1008.800" cy="208.900" r="6.050" fill="none" stroke="#1c222b" stroke-width="1.500"/><path d="M1008.800 205.300v3.900l2.900 1.800" fill="none" stroke="#1c222b" stroke-width="1.400"/><path d="M1355.5 273.3l8.6 8.6M1364.1 273.3l-8.6 8.6" stroke="#2869d8" stroke-width="1.4" fill="none"/><path d="M1098.500 348.200l3.900 3.900 3.900-3.900" stroke="#2869d8" stroke-width="1.500" fill="none"/></svg>
<span class="t" style="top:107.00px;font-size:13px;line-height:13px;left:987.00px;letter-spacing:-0.198px;color:#1c222b;-webkit-text-stroke:0.4px #1c222b;">Column labels</span>
<span class="t" style="top:173.00px;font-size:13px;line-height:13px;left:987.00px;letter-spacing:-0.250px;color:#1c222b;-webkit-text-stroke:0.4px #1c222b;transform:scaleX(0.9945);transform-origin:0 50%;">Row labels</span>
<span class="t" style="top:239.00px;font-size:13px;line-height:13px;left:987.00px;letter-spacing:-0.157px;color:#1c222b;-webkit-text-stroke:0.4px #1c222b;">Values</span>
<span class="t" style="top:137.00px;font-size:12.4px;line-height:12.4px;left:1019.90px;letter-spacing:-0.059px;color:#222b36;">Sales_Description</span>
<span class="t" style="top:203.00px;font-size:12.4px;line-height:12.4px;left:1020.10px;letter-spacing:-0.250px;color:#222b36;transform:scaleX(0.9788);transform-origin:0 50%;">Daily</span>
<div class="a" style="left:1015.8px;top:269px;width:6.2px;height:14px;background:#e1e7f0"></div>
<div class="a" style="left:1080.5px;top:269px;width:6.4px;height:14px;background:#e1e7f0"></div>
<span class="t m" style="top:271.00px;font-size:12px;line-height:12px;left:996.00px;letter-spacing:-0.721px;color:#3566c6;-webkit-text-stroke:0.15px #3566c6;text-rendering:geometricPrecision;">SUM</span>
<span class="t m" style="top:271.00px;font-size:12px;line-height:12px;left:1015.44px;letter-spacing:-0.721px;color:#3a424e;-webkit-text-stroke:0.15px #3a424e;text-rendering:geometricPrecision;">(POS_Sales)</span>
<span class="t m" style="top:308.00px;font-size:12px;line-height:12px;left:996.00px;letter-spacing:-0.721px;color:#767d88;-webkit-text-stroke:0.15px #767d88;text-rendering:geometricPrecision;">Value or formula</span>
<span class="t" style="top:344.00px;font-size:12.8px;line-height:12.8px;left:986.80px;letter-spacing:-0.118px;color:#2869d8;">Advanced options</span>
<div class="box" style="left:1270px;top:371px;width:55px;height:25px;border-color:#d3d9e4"></div>
<span class="t" style="top:377.00px;font-size:12px;line-height:12px;left:1279.60px;letter-spacing:-0.250px;color:#2869d8;-webkit-text-stroke:0.3px #2869d8;transform:scaleX(0.9777);transform-origin:0 50%;">Cancel</span>
<div class="btn" style="left:1333px;top:371px;width:41px;height:25px"></div>
<span class="t" style="top:377.00px;font-size:12px;line-height:12px;left:1342.60px;letter-spacing:-0.250px;font-weight:bold;color:#fff;transform:scaleX(0.9024);transform-origin:0 50%;">Add</span>
<div id="pfade"><i></i><b></b></div>
</body>
</html>
